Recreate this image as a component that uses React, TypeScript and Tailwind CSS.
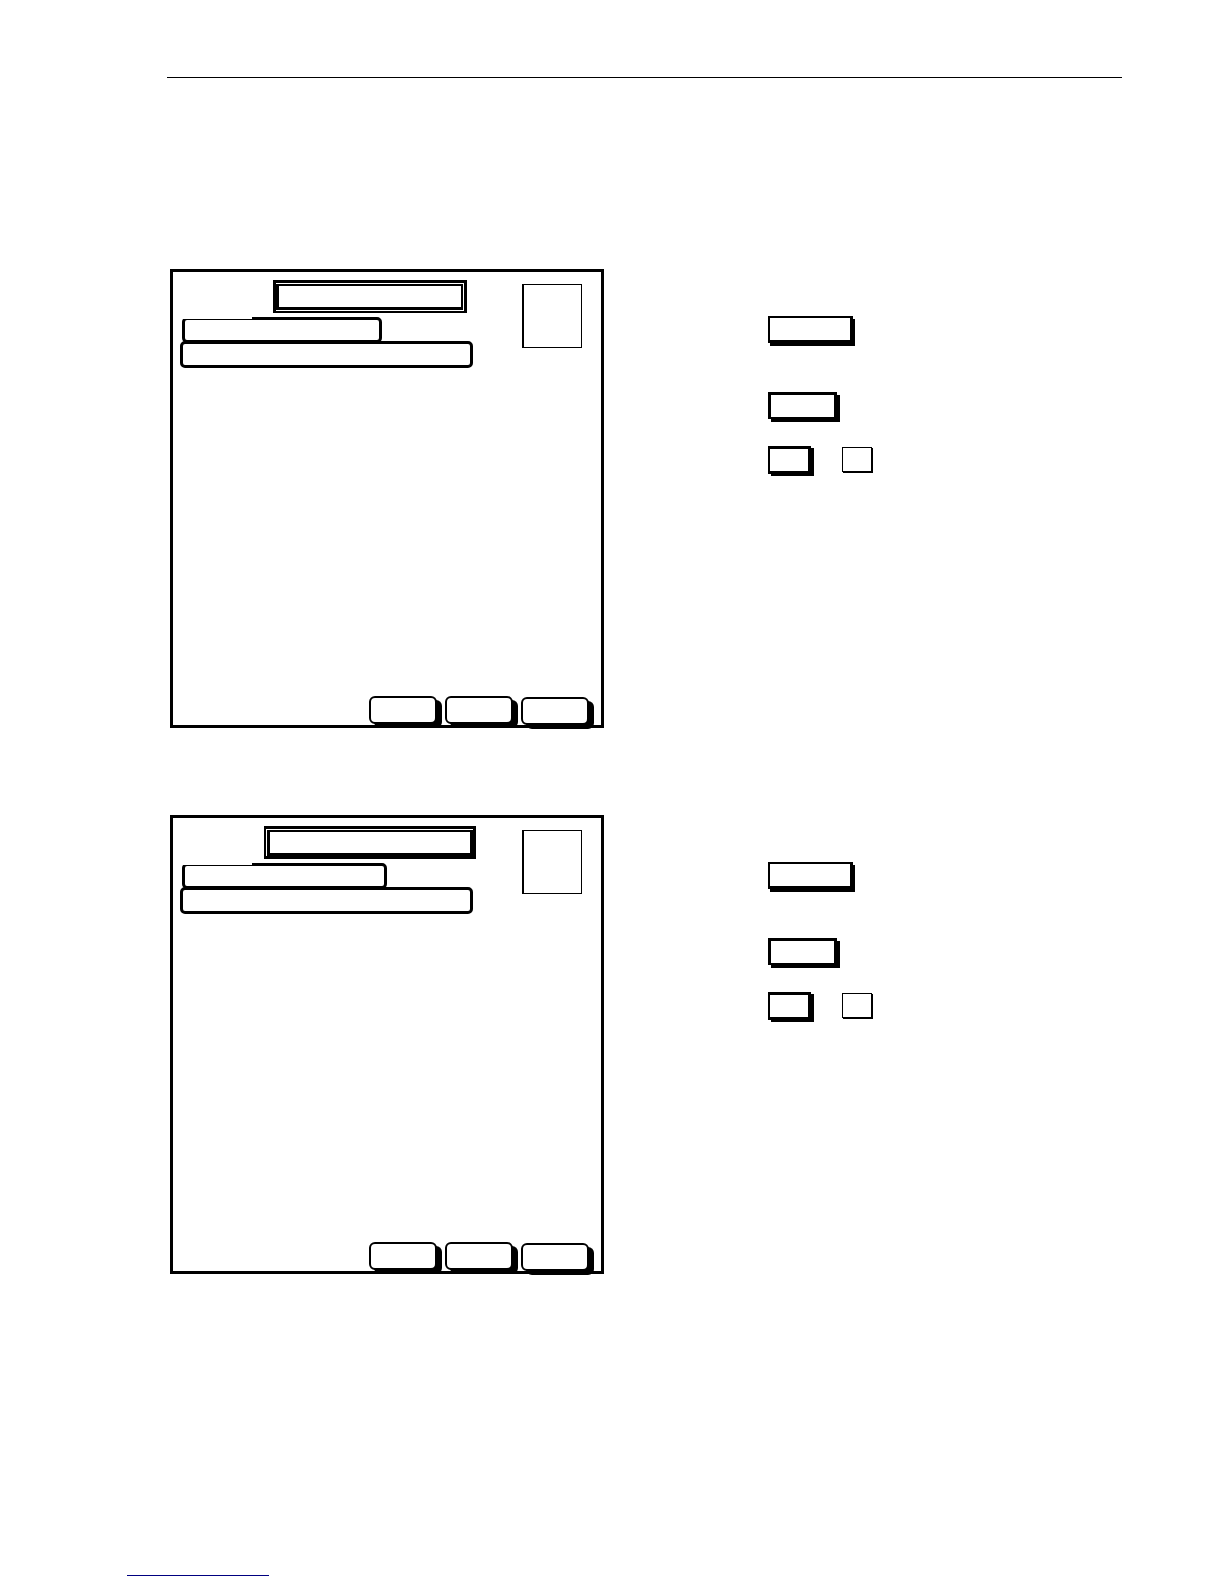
type Screen = {
  name: string;
  title: string;
  titleInner: string;
  firstLine: string;
};

const SCREENS: Screen[] = [
  {
    name: "Screen 1",
    title: "ml-[93px] w-[194px] border-x-[3px] border-t-[3px] border-b-2 pt-px pr-px pb-px",
    titleInner: "border-t-2 border-r-2 border-b-[3px] border-l-[3px]",
    firstLine: "w-[200px]",
  },
  {
    name: "Screen 2",
    title: "ml-[84px] w-[212px] border-y-[3px] border-l-2 border-r-[3px] pt-px pl-px",
    titleInner: "border-t-2 border-r-[3px] border-b-[3px] border-l-[3px]",
    firstLine: "w-[205px]",
  },
];

const SOFT_KEYS = [
  { label: "Left key", offset: "" },
  { label: "Middle key", offset: "" },
  { label: "Right key", offset: "mt-px" },
];

function ScreenPanel({ screen }: { screen: Screen }) {
  return (
    <div className="w-[434px] flex-none border-[3px] border-black bg-white pt-2">
      <div className="flex items-start justify-between pr-[19px] pl-[7px]">
        <div className="w-[293px]">
          <div className={["flex h-[33px] border-black", screen.title].join(" ")}>
            <div className={["flex-1 border-black", screen.titleInner].join(" ")} />
          </div>
          <div
            className={[
              "relative mt-1 ml-[2px] h-[26px] rounded-[5px] border-[3px] border-black",
              screen.firstLine,
            ].join(" ")}
          >
            {/* the left part of the top edge is only a hairline */}
            <span className="absolute -top-[3px] -left-[3px] h-[2px] w-[70px] bg-white" />
          </div>
          <div className="relative -mt-[2px] h-[27px] rounded-[5px] border-[3px] border-black bg-white" />
        </div>
        <div className="mt-1 h-16 w-[60px] border border-l-2 border-black" />
      </div>

      <div className="min-h-[328px]" />

      <div className="flex items-start justify-end gap-2 pr-3">
        {SOFT_KEYS.map((key) => (
          <button
            key={key.label}
            type="button"
            aria-label={key.label}
            className={[
              "h-7 w-[68px] rounded-md border-2 border-black bg-white shadow-[5px_4px_0_#000]",
              key.offset,
            ].join(" ")}
          />
        ))}
      </div>
    </div>
  );
}

function KeyColumn() {
  return (
    <div className="flex flex-col items-start pt-[47px]">
      <button
        type="button"
        aria-label="Wide key"
        className="h-[27px] w-[85px] border-2 border-r-[3px] border-b-[3px] border-black bg-white shadow-[2px_3px_0_#000]"
      />
      <button
        type="button"
        aria-label="Medium key"
        className="mt-[49px] h-[27px] w-[69px] border-[3px] border-b-2 border-black bg-white shadow-[3px_3px_0_#000]"
      />
      <div className="mt-[27px] flex items-start gap-[31px]">
        <button
          type="button"
          aria-label="Small key"
          className="h-7 w-[43px] border-[3px] border-l-2 border-black bg-white shadow-[3px_2px_0_#000]"
        />
        <button
          type="button"
          aria-label="Square key"
          className="mt-px h-[25px] w-[30px] border border-black bg-white shadow-[1px_1px_0_#000]"
        />
      </div>
    </div>
  );
}

export default function App() {
  return (
    <div className="min-h-screen w-full bg-white pt-[77px] pb-2 font-['Liberation_Sans',sans-serif]">
      <main className="pr-[102px] pl-[167px]">
        <hr className="border-t border-black" />
        <div className="mt-[191px] flex flex-col gap-[87px] pl-[3px]">
          {SCREENS.map((screen) => (
            <section
              key={screen.name}
              aria-label={screen.name}
              className="flex items-start gap-[164px]"
            >
              <ScreenPanel screen={screen} />
              <KeyColumn />
            </section>
          ))}
        </div>
      </main>
      <footer className="mt-[301px] pl-[127px]">
        <a
          href="#"
          aria-label="Back to top"
          className="block w-[142px] border-b border-[#000080]"
        />
      </footer>
    </div>
  );
}
